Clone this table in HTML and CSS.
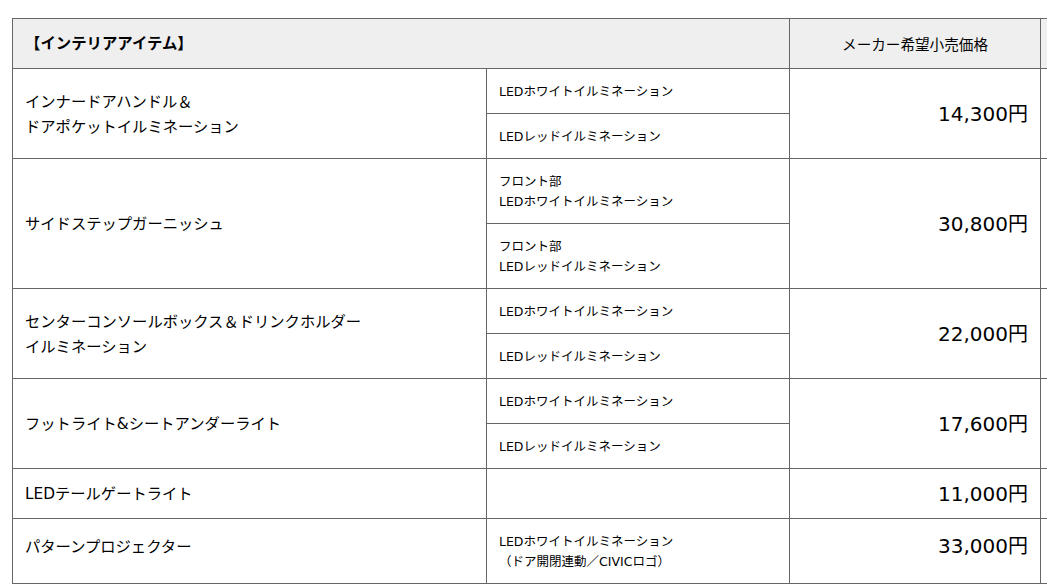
FILE: index.html
```html
<!DOCTYPE html>
<html lang="ja">
<head>
<meta charset="utf-8">
<link rel="stylesheet" href="styles.css">
</head>
<body>
<div class="wrap">
<table class="price-table">
  <colgroup>
    <col class="c-name">
    <col class="c-var">
    <col class="c-price">
    <col class="c-extra">
  </colgroup>
  <thead>
    <tr>
      <th colspan="2" class="th-title">【インテリアアイテム】</th>
      <th class="th-price">メーカー希望小売価格</th>
      <th class="th-extra"></th>
    </tr>
  </thead>
  <tbody>
    <tr>
      <td rowspan="2" class="name">インナードアハンドル＆<br>ドアポケットイルミネーション</td>
      <td class="var">LEDホワイトイルミネーション</td>
      <td rowspan="2" class="price">14,300円</td>
      <td rowspan="2" class="extra"></td>
    </tr>
    <tr><td class="var">LEDレッドイルミネーション</td></tr>

    <tr>
      <td rowspan="2" class="name">サイドステップガーニッシュ</td>
      <td class="var">フロント部<br>LEDホワイトイルミネーション</td>
      <td rowspan="2" class="price">30,800円</td>
      <td rowspan="2" class="extra"></td>
    </tr>
    <tr><td class="var">フロント部<br>LEDレッドイルミネーション</td></tr>

    <tr>
      <td rowspan="2" class="name">センターコンソールボックス＆ドリンクホルダー<br>イルミネーション</td>
      <td class="var">LEDホワイトイルミネーション</td>
      <td rowspan="2" class="price">22,000円</td>
      <td rowspan="2" class="extra"></td>
    </tr>
    <tr><td class="var">LEDレッドイルミネーション</td></tr>

    <tr>
      <td rowspan="2" class="name">フットライト&amp;シートアンダーライト</td>
      <td class="var">LEDホワイトイルミネーション</td>
      <td rowspan="2" class="price">17,600円</td>
      <td rowspan="2" class="extra"></td>
    </tr>
    <tr><td class="var">LEDレッドイルミネーション</td></tr>

    <tr>
      <td class="name">LEDテールゲートライト</td>
      <td class="var"></td>
      <td class="price">11,000円</td>
      <td class="extra"></td>
    </tr>

    <tr class="top-row">
      <td class="name">パターンプロジェクター</td>
      <td class="var">LEDホワイトイルミネーション<br>（ドア開閉連動／CIVICロゴ）</td>
      <td class="price">33,000円</td>
      <td class="extra"></td>
    </tr>
  </tbody>
</table>
</div>
</body>
</html>
```

FILE: styles.css
```css
html, body {
  margin: 0;
  padding: 0;
  background: #fff;
  overflow: hidden;
}

body {
  font-family: "DejaVu Sans", "Noto Sans CJK JP", sans-serif;
  color: #000;
}

.wrap {
  padding: 18px 0 0 12px;
}

.price-table {
  border-collapse: collapse;
  table-layout: fixed;
  width: 1278px;
}

.c-name { width: 474px; }
.c-var { width: 303px; }
.c-price { width: 251px; }
.c-extra { width: 250px; }

.price-table th,
.price-table td {
  border: 1px solid #666;
  padding: 13px 12px 11px;
  vertical-align: middle;
  font-weight: normal;
}

.price-table thead th {
  background: #efefef;
  height: 25px;
}

.th-title {
  text-align: left;
  font-weight: bold !important;
  font-size: 15.4px;
  line-height: 25px;
}

.th-price {
  text-align: center;
  font-size: 14.6px;
  line-height: 25px;
}

.name {
  font-size: 15.3px;
  line-height: 25px;
}

.var {
  font-size: 12.5px;
  line-height: 20px;
}

.price {
  text-align: right;
  font-size: 20px;
  line-height: 25px;
}

.top-row .name,
.top-row .price {
  vertical-align: top;
}

.top-row .name {
  padding-top: 16px;
}

.top-row .price {
  padding-top: 15px;
}
```
